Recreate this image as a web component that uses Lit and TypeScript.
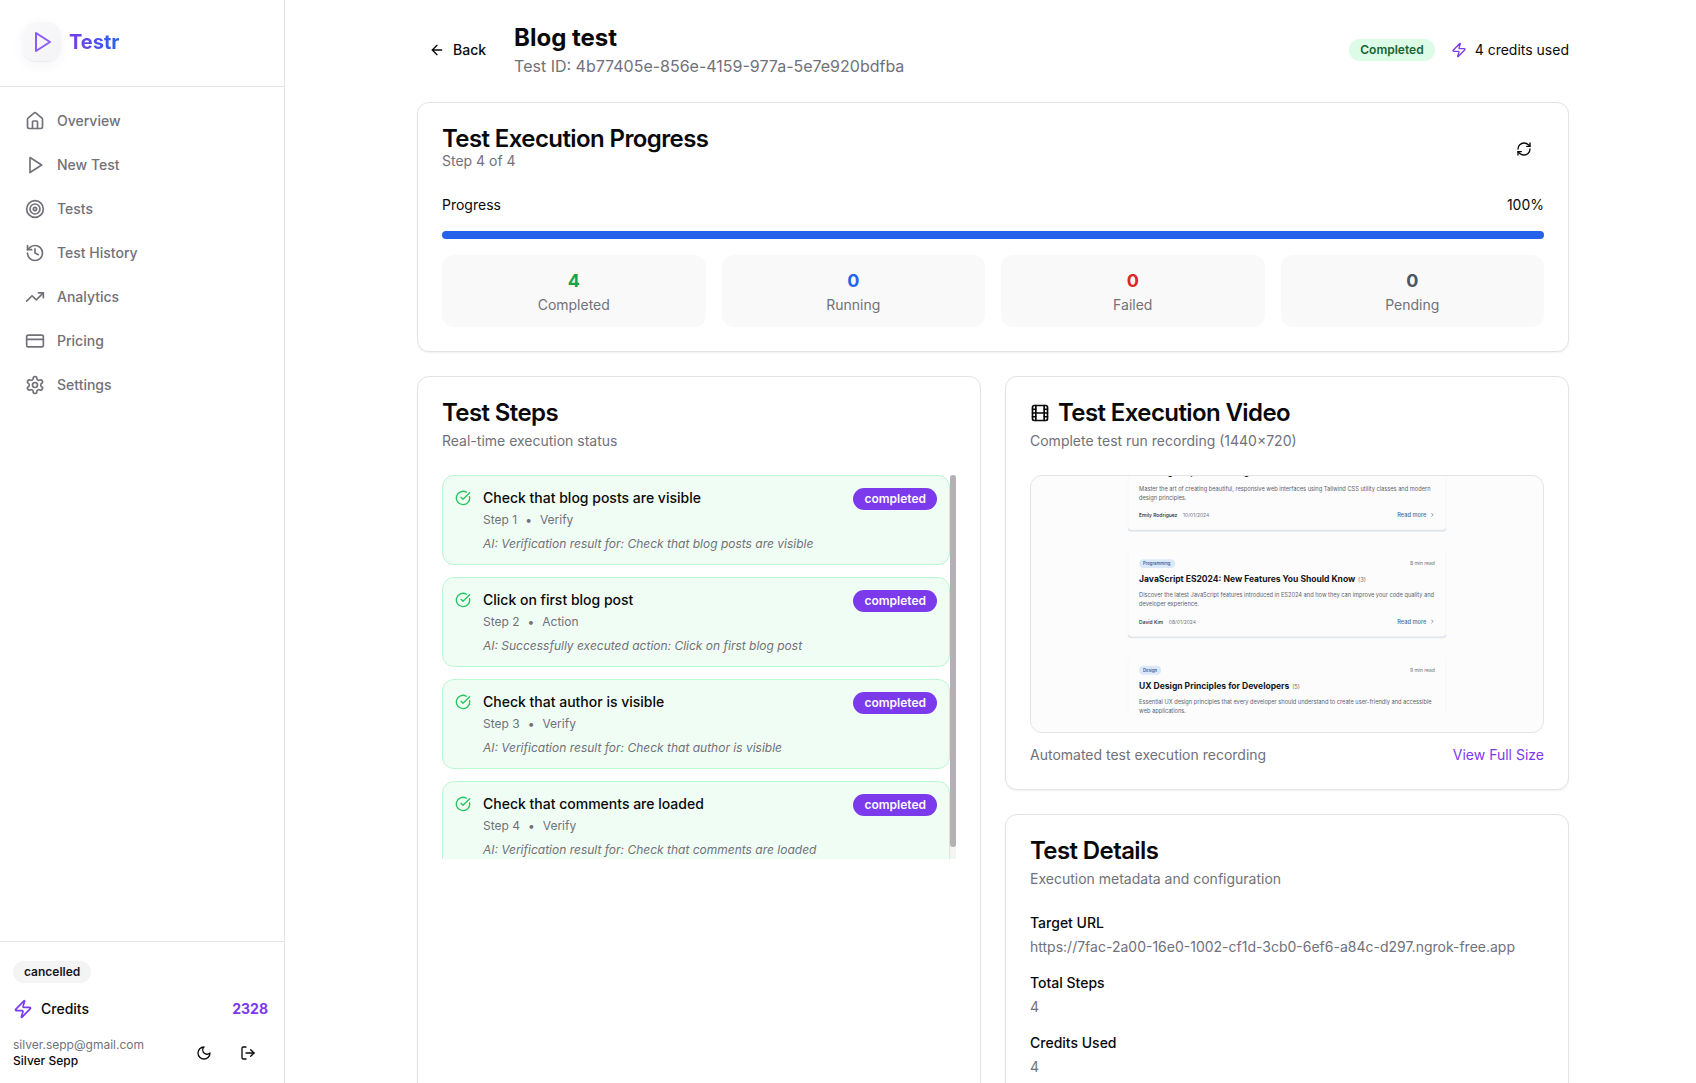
import { LitElement, html, css, svg, nothing } from "lit";
import { customElement, property } from "lit/decorators.js";
import { styleMap } from "lit/directives/style-map.js";

const ICONS = {
  home: svg`<path d="M15 21v-8a1 1 0 0 0-1-1h-4a1 1 0 0 0-1 1v8"/><path d="M3 10a2 2 0 0 1 .709-1.528l7-5.999a2 2 0 0 1 2.582 0l7 5.999A2 2 0 0 1 21 10v9a2 2 0 0 1-2 2H5a2 2 0 0 1-2-2z"/>`,
  play: svg`<polygon points="6 3 20 12 6 21 6 3"/>`,
  target: svg`<circle cx="12" cy="12" r="10"/><circle cx="12" cy="12" r="6"/><circle cx="12" cy="12" r="2"/>`,
  history: svg`<path d="M3 12a9 9 0 1 0 9-9 9.75 9.75 0 0 0-6.74 2.74L3 8"/><path d="M3 3v5h5"/><path d="M12 7v5l4 2"/>`,
  trending: svg`<polyline points="22 7 13.5 15.5 8.5 10.5 2 17"/><polyline points="16 7 22 7 22 13"/>`,
  card: svg`<rect width="20" height="14" x="2" y="5" rx="2"/><line x1="2" x2="22" y1="10" y2="10"/>`,
  settings: svg`<path d="M12.22 2h-.44a2 2 0 0 0-2 2v.18a2 2 0 0 1-1 1.73l-.43.25a2 2 0 0 1-2 0l-.15-.08a2 2 0 0 0-2.73.73l-.22.38a2 2 0 0 0 .73 2.73l.15.1a2 2 0 0 1 1 1.72v.51a2 2 0 0 1-1 1.74l-.15.09a2 2 0 0 0-.73 2.73l.22.38a2 2 0 0 0 2.73.73l.15-.08a2 2 0 0 1 2 0l.43.25a2 2 0 0 1 1 1.73V20a2 2 0 0 0 2 2h.44a2 2 0 0 0 2-2v-.18a2 2 0 0 1 1-1.73l.43-.25a2 2 0 0 1 2 0l.15.08a2 2 0 0 0 2.73-.73l.22-.39a2 2 0 0 0-.73-2.73l-.15-.08a2 2 0 0 1-1-1.74v-.5a2 2 0 0 1 1-1.74l.15-.09a2 2 0 0 0 .73-2.73l-.22-.38a2 2 0 0 0-2.73-.73l-.15.08a2 2 0 0 1-2 0l-.43-.25a2 2 0 0 1-1-1.73V4a2 2 0 0 0-2-2z"/><circle cx="12" cy="12" r="3"/>`,
  zap: svg`<path d="M4 14a1 1 0 0 1-.78-1.63l9.9-10.2a.5.5 0 0 1 .86.46l-1.92 6.02A1 1 0 0 0 13 10h7a1 1 0 0 1 .78 1.63l-9.9 10.2a.5.5 0 0 1-.86-.46l1.92-6.02A1 1 0 0 0 11 14z"/>`,
  moon: svg`<path d="M12 3a6 6 0 0 0 9 9 9 9 0 1 1-9-9Z"/>`,
  logout: svg`<path d="M9 21H5a2 2 0 0 1-2-2V5a2 2 0 0 1 2-2h4"/><polyline points="16 17 21 12 16 7"/><line x1="21" x2="9" y1="12" y2="12"/>`,
  back: svg`<path d="m12 19-7-7 7-7"/><path d="M19 12H5"/>`,
  refresh: svg`<path d="M3 12a9 9 0 0 1 9-9 9.75 9.75 0 0 1 6.74 2.74L21 8"/><path d="M21 3v5h-5"/><path d="M21 12a9 9 0 0 1-9 9 9.75 9.75 0 0 1-6.74-2.74L3 16"/><path d="M8 16H3v5"/>`,
  check: svg`<path d="M21.801 10A10 10 0 1 1 17 3.335"/><path d="m9 11 3 3L22 4"/>`,
  film: svg`<rect width="18" height="18" x="3" y="3" rx="2"/><path d="M7 3v18"/><path d="M3 7.5h4"/><path d="M3 12h18"/><path d="M3 16.5h4"/><path d="M17 3v18"/><path d="M17 7.5h4"/><path d="M17 16.5h4"/>`,
};

type IconName = keyof typeof ICONS;

const icon = (name: IconName, size = 16) => html`<svg
  class="icon"
  width=${size}
  height=${size}
  viewBox="0 0 24 24"
  aria-hidden="true"
>${ICONS[name]}</svg>`;

const shared = css`
  * {
    box-sizing: border-box;
  }
  h1, h2, h3, p, ul, ol, dl, dd, dt {
    margin: 0;
    padding: 0;
  }
  ul, ol {
    list-style: none;
  }
  a {
    color: inherit;
    text-decoration: none;
  }
  button {
    border: 0;
    background: none;
    color: inherit;
    font: inherit;
    cursor: pointer;
  }
  .icon {
    display: block;
    flex: none;
    fill: none;
    stroke: currentColor;
    stroke-width: 2;
    stroke-linecap: round;
    stroke-linejoin: round;
  }
  .badge {
    flex: none;
    border-radius: 11px;
    padding: 3px 11px;
    font-size: 12px;
    font-weight: 600;
    line-height: 16px;
  }
`;

@customElement("side-bar")
export class SideBar extends LitElement {
  static styles = [
    shared,
    css`
      :host {
        display: flex;
        flex-direction: column;
        flex: none;
        width: 285px;
        border-right: 1px solid #e4e4e7;
      }
      .brand {
        display: flex;
        align-items: center;
        gap: 8px;
        padding: 22px 22px 25px;
        border-bottom: 1px solid #e4e4e7;
      }
      .mark {
        display: grid;
        place-items: center;
        width: 39px;
        height: 39px;
        border-radius: 14px;
        background: linear-gradient(135deg, #fafafb, #f3f3f6);
        box-shadow: 0 4px 12px rgba(60, 50, 120, 0.06), 0 1px 1px rgba(0, 0, 0, 0.05);
        color: #8b5cf6;
      }
      .name {
        font-size: 20px;
        font-weight: 700;
        line-height: 28px;
        background: linear-gradient(90deg, #7c3aed, #2563eb);
        background-clip: text;
        color: transparent;
      }
      .nav {
        flex: 1;
        padding: 14px 13px;
      }
      .nav ul {
        display: flex;
        flex-direction: column;
        gap: 4px;
      }
      .nav a {
        display: flex;
        align-items: center;
        gap: 12px;
        height: 40px;
        padding: 0 12px;
        font-weight: 500;
        color: #71717a;
      }
      .foot {
        display: flex;
        flex-direction: column;
        align-items: flex-start;
        gap: 12px;
        padding: 19px 16px 12px 13px;
        border-top: 1px solid #e4e4e7;
      }
      .plan {
        background: #f4f4f5;
        color: #18181b;
      }
      .credits, .account {
        display: flex;
        align-items: center;
        align-self: stretch;
      }
      .credits {
        gap: 8px;
        height: 28px;
        font-weight: 500;
      }
      .credits .icon, .amount {
        color: #7c3aed;
      }
      .amount {
        margin-left: auto;
        font-weight: 700;
      }
      .account {
        gap: 4px;
        height: 36px;
      }
      .who {
        flex: 1;
        font-size: 12px;
        line-height: 16px;
      }
      .mail {
        color: #71717a;
      }
      .full {
        font-weight: 500;
      }
      .tool {
        display: grid;
        place-items: center;
        width: 40px;
        height: 36px;
        padding: 0;
      }
    `,
  ];

  private links: [IconName, string][] = [
    ["home", "Overview"],
    ["play", "New Test"],
    ["target", "Tests"],
    ["history", "Test History"],
    ["trending", "Analytics"],
    ["card", "Pricing"],
    ["settings", "Settings"],
  ];

  render() {
    return html`
      <div class="brand">
        <span class="mark">${icon("play", 24)}</span>
        <span class="name">Testr</span>
      </div>
      <nav class="nav">
        <ul>
          ${this.links.map(([i, label]) => html`<li><a href="#">${icon(i, 20)}<span>${label}</span></a></li>`)}
        </ul>
      </nav>
      <div class="foot">
        <span class="badge plan">cancelled</span>
        <div class="credits">${icon("zap", 20)}<span>Credits</span><span class="amount">2328</span></div>
        <div class="account">
          <div class="who">
            <p class="mail">silver.sepp@gmail.com</p>
            <p class="full">Silver Sepp</p>
          </div>
          <button class="tool" aria-label="Toggle theme">${icon("moon")}</button>
          <button class="tool" aria-label="Log out">${icon("logout")}</button>
        </div>
      </div>
    `;
  }
}

interface Post {
  tag?: string;
  pillWidth?: number;
  read?: string;
  title: string;
  count: string;
  lines: [string, string];
  author?: string;
  date?: string;
}

const POSTS: Post[] = [
  {
    title: "Building Responsive Designs with Tailwind CSS",
    count: "(4)",
    lines: [
      "Master the art of creating beautiful, responsive web interfaces using Tailwind CSS utility classes and modern",
      "design principles.",
    ],
    author: "Emily Rodriguez",
    date: "10/01/2024",
  },
  {
    tag: "Programming",
    pillWidth: 102,
    read: "8 min read",
    title: "JavaScript ES2024: New Features You Should Know",
    count: "(3)",
    lines: [
      "Discover the latest JavaScript features introduced in ES2024 and how they can improve your code quality and",
      "developer experience.",
    ],
    author: "David Kim",
    date: "08/01/2024",
  },
  {
    tag: "Design",
    pillWidth: 62,
    read: "9 min read",
    title: "UX Design Principles for Developers",
    count: "(5)",
    lines: [
      "Essential UX design principles that every developer should understand to create user-friendly and accessible",
      "web applications.",
    ],
  },
];

/** A still of the recorded page, drawn in the recording's own 1440×720 space. */
@customElement("video-frame")
export class VideoFrame extends LitElement {
  static styles = css`
    :host {
      display: block;
    }
    .frame {
      display: block;
      width: 100%;
      height: auto;
    }
    text {
      font-size: 16px;
      fill: #5d636d;
    }
    .edge {
      fill: none;
      stroke: #dfe6ec;
      stroke-width: 5;
    }
    .side {
      stroke: #f3f5f7;
      stroke-width: 2;
    }
    .pill {
      fill: #dbe8f8;
    }
    .tag {
      font-size: 12px;
      font-weight: 500;
      fill: #2f4f8f;
    }
    .small {
      font-size: 14px;
      font-weight: 400;
      fill: #70767f;
    }
    .author {
      font-size: 14px;
      font-weight: 500;
      fill: #23272e;
    }
    .title {
      font-size: 24px;
      font-weight: 700;
      fill: #14171c;
    }
    .count {
      font-size: 16px;
      font-weight: 400;
      fill: #666c75;
    }
    .more {
      font-weight: 500;
      fill: #4a6c9e;
    }
    .chevron {
      fill: none;
      stroke: #4a6c9e;
      stroke-width: 2;
    }
  `;

  private post(p: Post, i: number) {
    return svg`<g transform="translate(272 ${-97 + i * 300})">
      <path class="side" d="M1 10V246M895 10V246"/>
      <path class="edge" d="M2 244q1 7 8 7H886q7 0 8-7"/>
      ${p.tag
        ? svg`<rect class="pill" x="32" y="31" width=${p.pillWidth} height="25" rx="12"/>
            <text class="tag" x="43" y="48">${p.tag}</text>
            <text class="small" x="864" y="48" text-anchor="end">${p.read}</text>`
        : nothing}
      <text class="title" x="32" y="95">${p.title}<tspan class="count" dx="8">${p.count}</tspan></text>
      <text x="32" y="138">${p.lines[0]}</text>
      <text x="32" y="164">${p.lines[1]}</text>
      ${p.author
        ? svg`<text class="author" x="32" y="212">${p.author}<tspan class="small" dx="16">${p.date}</tspan></text>
            <text class="more" x="840" y="212" text-anchor="end">Read more</text>
            <path class="chevron" d="m854 201 5 5-5 5"/>`
        : nothing}
    </g>`;
  }

  render() {
    return html`<svg class="frame" viewBox="0 0 1440 720" role="img" aria-label="Test recording">
      <defs><clipPath id="screen"><rect width="1440" height="669"/></clipPath></defs>
      <g clip-path="url(#screen)">${POSTS.map((p, i) => this.post(p, i))}</g>
    </svg>`;
  }
}

interface Step {
  title: string;
  kind: string;
  note: string;
}

@customElement("step-list")
export class StepList extends LitElement {
  static styles = [
    shared,
    css`
      :host {
        display: block;
      }
      .viewport {
        display: flex;
        height: 384px;
        overflow: hidden;
      }
      .steps {
        display: flex;
        flex: 1;
        flex-direction: column;
        gap: 12px;
        min-width: 0;
      }
      .step {
        display: flex;
        align-items: flex-start;
        gap: 12px;
        padding: 12px;
        border: 1px solid #bbf7d0;
        border-radius: 12px;
        background: #f0fdf4;
      }
      .step > .icon {
        margin-top: 2px;
        color: #22c55e;
      }
      .body {
        flex: 1;
        min-width: 0;
        font-size: 12px;
        line-height: 16px;
        color: #71717a;
      }
      .title {
        font-size: 14px;
        font-weight: 500;
        line-height: 20px;
        color: #09090b;
      }
      .meta {
        display: flex;
        gap: 8px;
        padding: 4px 0 8px;
      }
      .note {
        font-style: italic;
      }
      .done {
        background: #7c3aed;
        color: #fafafa;
      }
      .track {
        flex: none;
        width: 6px;
        background: #f4f4f5;
      }
      .thumb {
        border-radius: 3px;
        background: #b3b1b6;
      }
    `,
  ];

  @property({ attribute: false }) steps: Step[] = [
    { title: "Check that blog posts are visible", kind: "Verify", note: "AI: Verification result for: Check that blog posts are visible" },
    { title: "Click on first blog post", kind: "Action", note: "AI: Successfully executed action: Click on first blog post" },
    { title: "Check that author is visible", kind: "Verify", note: "AI: Verification result for: Check that author is visible" },
    { title: "Check that comments are loaded", kind: "Verify", note: "AI: Verification result for: Check that comments are loaded" },
  ];

  render() {
    return html`<div class="viewport">
      <ol class="steps">
        ${this.steps.map(
          (s, i) => html`<li class="step">
            ${icon("check")}
            <div class="body">
              <h3 class="title">${s.title}</h3>
              <p class="meta"><span>Step ${i + 1}</span><span>•</span><span>${s.kind}</span></p>
              <p class="note">${s.note}</p>
            </div>
            <span class="badge done">completed</span>
          </li>`
        )}
      </ol>
      <div class="track" aria-hidden="true"><div class="thumb" style=${styleMap({ height: `${(384 / 396) * 100}%` })}></div></div>
    </div>`;
  }
}

@customElement("app-root")
export class AppRoot extends LitElement {
  static styles = [
    shared,
    css`
      :host {
        display: flex;
        height: 100vh;
        overflow: hidden;
        background: #fff;
        color: #09090b;
        font-family: Inter, "Liberation Sans", sans-serif;
        font-size: 14px;
        line-height: 20px;
      }
      .main {
        flex: 1;
        min-width: 0;
        overflow: hidden;
        padding: 22px 19px 24px 24px;
      }
      .page {
        display: flex;
        flex-direction: column;
        gap: 24px;
        max-width: 1152px;
        margin: 0 auto;
      }
      .top {
        display: flex;
        align-items: center;
        gap: 16px;
      }
      .back {
        display: flex;
        align-items: center;
        gap: 8px;
        height: 36px;
        padding: 0 12px;
        font-weight: 500;
      }
      .heading {
        flex: 1;
      }
      .heading h1 {
        font-size: 24px;
        font-weight: 700;
        line-height: 32px;
      }
      .heading p {
        font-size: 16px;
        line-height: 24px;
        color: #71717a;
      }
      .ok {
        background: #dcfce7;
        color: #166534;
      }
      .used {
        display: flex;
        align-items: center;
        gap: 8px;
      }
      .used .icon {
        color: #7c3aed;
      }
      .card {
        padding: 24px;
        border: 1px solid #e4e4e7;
        border-radius: 12px;
        background: #fff;
        box-shadow: 0 1px 2px rgba(0, 0, 0, 0.06);
      }
      .head {
        display: flex;
        flex-direction: column;
        gap: 6px;
        margin-bottom: 24px;
      }
      .head.split {
        flex-direction: row;
        align-items: center;
        justify-content: space-between;
      }
      .head h2 {
        display: flex;
        align-items: center;
        gap: 8px;
        font-size: 24px;
        font-weight: 600;
        line-height: 24px;
        letter-spacing: -0.025em;
      }
      .muted {
        color: #71717a;
      }
      .refresh {
        display: grid;
        place-items: center;
        width: 40px;
        height: 36px;
        padding: 0;
      }
      .row {
        display: flex;
        justify-content: space-between;
      }
      .bar {
        height: 8px;
        margin: 16px 0;
        border-radius: 4px;
        background: #f4f4f5;
        overflow: hidden;
      }
      .fill {
        height: 100%;
        background: #2563eb;
      }
      .stats {
        display: grid;
        grid-template-columns: repeat(4, 1fr);
        gap: 16px;
      }
      .stat {
        padding: 12px;
        border-radius: 12px;
        background: #f9f9f9;
        text-align: center;
      }
      .num {
        font-size: 18px;
        font-weight: 700;
        line-height: 28px;
      }
      .green { color: #16a34a; }
      .blue { color: #2563eb; }
      .red { color: #dc2626; }
      .gray { color: #4b5563; }
      .columns {
        display: grid;
        grid-template-columns: repeat(2, minmax(0, 1fr));
        gap: 24px;
      }
      .stack {
        display: flex;
        flex-direction: column;
        gap: 24px;
      }
      .video {
        margin-bottom: 12px;
        border: 1px solid #e4e4e7;
        border-radius: 12px;
        background: #fcfcfc;
        overflow: hidden;
      }
      .full {
        color: #7c3aed;
      }
      .details {
        display: flex;
        flex-direction: column;
        gap: 16px;
      }
      .details dt {
        margin-bottom: 4px;
        font-weight: 500;
      }
      .details dd {
        color: #71717a;
      }
    `,
  ];

  private stats: [string, string, string][] = [
    ["4", "Completed", "green"],
    ["0", "Running", "blue"],
    ["0", "Failed", "red"],
    ["0", "Pending", "gray"],
  ];

  private details: [string, string][] = [
    ["Target URL", "https://7fac-2a00-16e0-1002-cf1d-3cb0-6ef6-a84c-d297.ngrok-free.app"],
    ["Total Steps", "4"],
    ["Credits Used", "4"],
  ];

  @property({ type: Number }) progress = 100;

  render() {
    return html`
      <side-bar></side-bar>
      <main class="main">
        <div class="page">
          <header class="top">
            <button class="back">${icon("back")}Back</button>
            <div class="heading">
              <h1>Blog test</h1>
              <p>Test ID: 4b77405e-856e-4159-977a-5e7e920bdfba</p>
            </div>
            <span class="badge ok">Completed</span>
            <span class="used">${icon("zap")}4 credits used</span>
          </header>

          <section class="card">
            <div class="head split">
              <div>
                <h2>Test Execution Progress</h2>
                <p class="muted">Step 4 of 4</p>
              </div>
              <button class="refresh" aria-label="Refresh">${icon("refresh")}</button>
            </div>
            <div class="row"><span id="progress-label">Progress</span><span>${this.progress}%</span></div>
            <div class="bar" role="progressbar" aria-labelledby="progress-label" aria-valuenow=${this.progress}>
              <div class="fill" style=${styleMap({ width: `${this.progress}%` })}></div>
            </div>
            <div class="stats">
              ${this.stats.map(
                ([n, label, tone]) => html`<div class="stat">
                  <p class="num ${tone}">${n}</p>
                  <p class="muted">${label}</p>
                </div>`
              )}
            </div>
          </section>

          <div class="columns">
            <section class="card">
              <div class="head">
                <h2>Test Steps</h2>
                <p class="muted">Real-time execution status</p>
              </div>
              <step-list></step-list>
            </section>

            <div class="stack">
              <section class="card">
                <div class="head">
                  <h2>${icon("film", 20)}Test Execution Video</h2>
                  <p class="muted">Complete test run recording (1440×720)</p>
                </div>
                <div class="video"><video-frame></video-frame></div>
                <div class="row">
                  <span class="muted">Automated test execution recording</span>
                  <a class="full" href="#">View Full Size</a>
                </div>
              </section>

              <section class="card">
                <div class="head">
                  <h2>Test Details</h2>
                  <p class="muted">Execution metadata and configuration</p>
                </div>
                <dl class="details">
                  ${this.details.map(([k, v]) => html`<div><dt>${k}</dt><dd>${v}</dd></div>`)}
                </dl>
              </section>
            </div>
          </div>
        </div>
      </main>
    `;
  }
}
